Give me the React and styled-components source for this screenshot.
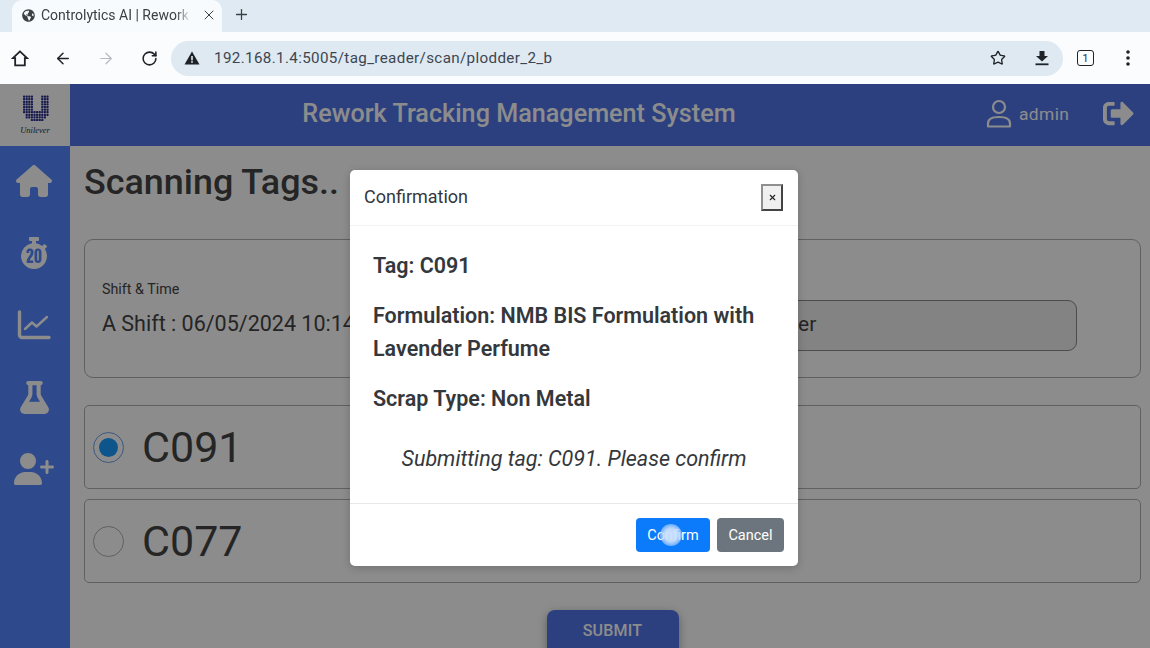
import styled, { createGlobalStyle } from 'styled-components';
import { ArrowLeft, ArrowRight, Plus, RotateCw, Star, X } from 'lucide-react';
import { FaGlobeAmericas, FaSignOutAlt, FaStopwatch20 } from 'react-icons/fa';
import { FaFlask, FaHouse, FaUserPlus } from 'react-icons/fa6';

const Global = createGlobalStyle`
    html, body { margin: 0; height: 100%; overflow: hidden; }
    body { font-family: Roboto, "Liberation Sans", sans-serif; color: #444; }
`;

const Shell = styled.div`
    width: 1150px;
    height: 648px;
    display: flex;
    flex-direction: column;
    overflow: hidden;
`;

const TabStrip = styled.div`
    height: 32px;
    background: #dfeaf3;
    display: flex;
    align-items: flex-end;
    padding-left: 12px;
`;

const Tab = styled.div`
    width: 210px;
    height: 32px;
    box-sizing: border-box;
    padding: 0 5px 2px 10px;
    background: #f8fbfd;
    border-radius: 10px 10px 0 0;
    display: flex;
    align-items: center;
    font-size: 14px;
    color: #3c4043;
    white-space: nowrap;
`;

const TabTitle = styled.span`
    width: 150px;
    margin-left: 6px;
    overflow: hidden;
    -webkit-mask-image: linear-gradient(90deg, #000 90%, transparent);
    mask-image: linear-gradient(90deg, #000 90%, transparent);
`;

const NewTab = styled.div`
    margin: 0 0 9px 11px;
    display: flex;
    color: #3c4043;
`;

const Toolbar = styled.div`
    height: 52px;
    background: #fafcfe;
    display: flex;
    align-items: center;
    padding-left: 11px;
`;

const NavButton = styled.div`
    width: 18px;
    display: flex;
    justify-content: center;
    margin-right: ${props => props.gap || 25}px;
    color: ${props => props.dim ? '#b5bbc0' : '#1f2327'};
`;

const Omnibox = styled.div`
    width: 892px;
    height: 35px;
    background: #dfe9f2;
    border-radius: 18px;
    display: flex;
    align-items: center;
    padding: 0 13px 0 13px;
    box-sizing: border-box;
    font-size: 15.2px;
    letter-spacing: .35px;
    color: #3d4650;
`;

const Url = styled.span`
    margin-left: 14px;
    flex: 1;
`;

const OmniIcon = styled.div`
    display: flex;
    margin-left: ${props => props.gap || 0}px;
    color: #1f2327;
`;

const TabCount = styled.div`
    width: 17px;
    height: 16px;
    box-sizing: border-box;
    margin: 0 32px 0 14px;
    border: 1.8px solid #1f2327;
    border-radius: 3px;
    font-size: 10.5px;
    display: flex;
    align-items: center;
    justify-content: center;
    color: #1f2327;
`;

const Page = styled.div`
    position: relative;
    flex: 1;
    min-height: 0;
    background: #fff;
    overflow: hidden;
`;

const Header = styled.header`
    height: 62px;
    display: flex;
    align-items: center;
    background: #5076e8;
`;

const LogoCell = styled.div`
    width: 70px;
    height: 62px;
    background: #fff;
    display: flex;
    flex-direction: column;
    align-items: center;
    padding-top: 11px;
    box-sizing: border-box;
    color: #2a2f8c;
`;

const LogoWord = styled.span`
    font-family: "Liberation Serif", serif;
    font-style: italic;
    font-size: 8.5px;
    line-height: 10px;
    margin-top: 3px;
    color: #333;
`;

const HeaderTitle = styled.h1`
    margin: 0;
    width: 898px;
    padding-bottom: 4px;
    text-align: center;
    font-size: 25.2px;
    font-weight: 500;
    color: #fff;
`;

const UserBox = styled.div`
    display: flex;
    align-items: center;
    gap: 7px;
    margin-left: 18px;
    padding-bottom: 3px;
    font-size: 17.4px;
    letter-spacing: .4px;
    color: #fff;
`;

const Logout = styled.div`
    display: flex;
    margin-left: 34px;
    padding-bottom: 3px;
    color: #fff;
`;

const Main = styled.div`
    display: flex;
    height: 502px;
`;

const Sidebar = styled.nav`
    width: 70px;
    flex: none;
    background: #5587ff;
    display: flex;
    flex-direction: column;
    align-items: center;
    padding: 16px 2px 0 0;
    box-sizing: border-box;
    gap: 34px;
    color: #fff;
`;

const SideIcon = styled.div`
    height: 38px;
    display: flex;
    align-items: center;
    justify-content: center;
`;

const Content = styled.main`
    flex: 1;
    padding: 14px 9px 0 14px;
`;

const Heading = styled.h2`
    margin: 0 0 35px;
    font-size: 35.9px;
    line-height: 44px;
    font-weight: 500;
`;

const ShiftCard = styled.section`
    height: 139px;
    box-sizing: border-box;
    border: 1px solid #b0b0b0;
    border-radius: 9px;
    padding: 0 63px 0 17px;
    display: flex;
    align-items: center;
    justify-content: space-between;
    margin-bottom: 27px;
`;

const Field = styled.div`
    display: flex;
    flex-direction: column;
    gap: 14px;
`;

const FieldLabel = styled.span`
    font-size: 14.3px;
`;

const FieldValue = styled.span`
    font-size: 21.5px;
    white-space: nowrap;
`;

const FakeInput = styled.div`
    width: 400px;
    height: 51px;
    box-sizing: border-box;
    align-self: flex-end;
    margin-bottom: 26px;
    padding: 0 0 3px 66px;
    border: 1px solid #8a8a8a;
    border-radius: 9px;
    background: #eee;
    display: flex;
    align-items: center;
    font-size: 21px;
`;

const TagRow = styled.label`
    height: 84px;
    box-sizing: border-box;
    border: 1px solid #b0b0b0;
    border-radius: 5px;
    display: flex;
    align-items: center;
    padding-left: 8px;
    gap: 18px;
    font-size: 43px;
    margin-bottom: 10px;
`;

const Radio = styled.span`
    width: 31px;
    height: 31px;
    box-sizing: border-box;
    border-radius: 50%;
    border: 1.5px solid ${props => props.on ? '#6f9fe8' : '#b0b0b0'};
    display: flex;
    align-items: center;
    justify-content: center;

    &::after {
        content: '';
        width: 19px;
        height: 19px;
        border-radius: 50%;
        background: ${props => props.on ? '#1a9cff' : 'transparent'};
    }
`;

const SubmitWrap = styled.div`
    display: flex;
    justify-content: center;
    padding-top: 17px;
`;

const Submit = styled.button`
    width: 132px;
    height: 48px;
    border: 0;
    border-radius: 8px;
    background: #5076e8;
    color: #fff;
    font: 500 16px Roboto, sans-serif;
    letter-spacing: .2px;
    padding-bottom: 8px;
    box-shadow: 0 3px 10px rgba(0, 0, 0, .35);
`;

const Backdrop = styled.div`
    position: absolute;
    inset: 0;
    background: rgba(0, 0, 0, .45);
    padding: 86px 0 0 350px;
`;

const Modal = styled.div`
    width: 448px;
    height: 396px;
    background: #fff;
    border-radius: 5px;
    display: flex;
    flex-direction: column;
    box-shadow: 0 2px 8px rgba(0, 0, 0, .2);
`;

const ModalHead = styled.div`
    height: 56px;
    flex: none;
    box-sizing: border-box;
    border-bottom: 1px solid #f0f2f3;
    padding: 0 15px 0 14px;
    display: flex;
    align-items: center;
    justify-content: space-between;
    font-size: 18px;
    color: #33373b;
`;

const HeadTitle = styled.span`
    margin-top: -2px;
`;

const CloseButton = styled.div`
    width: 22px;
    height: 27px;
    box-sizing: border-box;
    border: 2px solid;
    border-color: #8f8f8f #444 #444 #8f8f8f;
    background: #f0f0f0;
    display: flex;
    align-items: center;
    justify-content: center;
    color: #222;
`;

const ModalBody = styled.div`
    flex: 1;
    padding: 23px 23px 0;
    font-size: 21.5px;
    font-weight: 600;
    line-height: 33px;
    color: #34383c;
`;

const Info = styled.p`
    margin: 0 0 17px;
`;

const Note = styled.p`
    margin: 27px 0 0;
    text-align: center;
    font-size: 21.5px;
    font-weight: 400;
    font-style: italic;
`;

const ModalFoot = styled.div`
    height: 63px;
    flex: none;
    box-sizing: border-box;
    border-top: 1px solid #e6e8ea;
    padding: 14px 14px 0 0;
    display: flex;
    justify-content: flex-end;
    gap: 7px;
`;

const ModalButton = styled.button`
    position: relative;
    height: 34px;
    width: ${props => props.wide ? 74 : 67}px;
    border: 0;
    border-radius: 4px;
    background: ${props => props.primary ? '#0b7bfb' : '#6c757d'};
    color: #fff;
    font: 400 14.5px Roboto, sans-serif;
    padding: 0;
`;

const TouchDot = styled.span`
    position: absolute;
    left: 24px;
    top: 6px;
    width: 22px;
    height: 22px;
    border-radius: 50%;
    background: radial-gradient(circle, rgba(205, 225, 252, .95) 40%, rgba(150, 195, 250, .6) 75%, transparent);
`;

function UnileverMark() {
    const dots = [];
    for (let y = 0.5; y < 27; y += 2.6) {
        for (let x = 1; x < 27; x += 2.6) {
            const inGap = x > 9.5 && x < 17 && y < 15;
            const dx = x - 13.5, dy = y - 13;
            if (!inGap && (y < 14 || dx * dx + dy * dy < 170)) dots.push([x, y]);
        }
    }
    return (
        <svg width="27" height="27" viewBox="0 0 27 27" fill="currentColor">
            {dots.map(([x, y]) => <rect key={x + '-' + y} x={x} y={y} width="2.2" height="2.2" rx=".7" />)}
        </svg>
    );
}

function ChromeHome() {
    return (
        <svg width="19" height="19" viewBox="0 0 19 19" fill="none" stroke="currentColor" strokeWidth="1.9" strokeLinejoin="miter">
            <path d="M9.5 2 2 9.2h2.4v7.6h10.2V9.2H17z" />
        </svg>
    );
}

function DownloadIcon() {
    return (
        <svg width="16" height="16" viewBox="0 0 16 16" fill="currentColor">
            <path d="M5.5 1h5v5h3.5L8 11.6 2 6h3.5z" />
            <rect x="1.5" y="13.4" width="13" height="1.8" />
        </svg>
    );
}

function WarnIcon() {
    return (
        <svg width="16" height="14" viewBox="0 0 16 14">
            <path d="M8 .5 15.5 13.5H.5z" fill="#1f2327" />
            <rect x="7.2" y="5" width="1.6" height="4.4" fill="#dfe9f2" />
            <rect x="7.2" y="10.2" width="1.6" height="1.6" fill="#dfe9f2" />
        </svg>
    );
}

function KebabIcon() {
    return (
        <svg width="4" height="16" viewBox="0 0 4 16" fill="currentColor">
            <circle cx="2" cy="2" r="1.8" />
            <circle cx="2" cy="8" r="1.8" />
            <circle cx="2" cy="14" r="1.8" />
        </svg>
    );
}

function UserOutline() {
    return (
        <svg width="26" height="29" viewBox="0 0 26 29" fill="none" stroke="currentColor" strokeWidth="2.2">
            <circle cx="13" cy="8" r="6" />
            <path d="M2 27.5v-3c0-4 4-6.5 11-6.5s11 2.500 11 6.500v3z" strokeLinejoin="round" />
        </svg>
    );
}

function ChartIcon() {
    return (
        <svg width="34" height="30" viewBox="0 0 34 30" fill="none" stroke="currentColor">
            <path d="M2.500 2v23a2.500 2.500 0 0 0 2.500 2.500h27" strokeWidth="3.400" strokeLinecap="round" />
            <path d="M8 19l7-6.500 4.500 4L30 7" strokeWidth="2.400" strokeLinecap="round" strokeLinejoin="round" />
        </svg>
    );
}

export default function App() {
    return (
        <Shell>
            <Global />
            <TabStrip>
                <Tab>
                    <FaGlobeAmericas size={13} color="#3c4043" style={{ flex: 'none' }} />
                    <TabTitle>Controlytics AI | Rework Tracking</TabTitle>
                    <X size={16} strokeWidth={1.5} style={{ flex: 'none', marginLeft: 10 }} />
                </Tab>
                <NewTab><Plus size={17} strokeWidth={1.8} /></NewTab>
            </TabStrip>
            <Toolbar>
                <NavButton><ChromeHome /></NavButton>
                <NavButton><ArrowLeft size={19} strokeWidth={2} /></NavButton>
                <NavButton dim><ArrowRight size={19} strokeWidth={1.6} /></NavButton>
                <NavButton gap={13}><RotateCw size={17} strokeWidth={2.2} /></NavButton>
                <Omnibox>
                    <WarnIcon />
                    <Url>192.168.1.4:5005/tag_reader/scan/plodder_2_b</Url>
                    <OmniIcon><Star size={16} strokeWidth={2} /></OmniIcon>
                    <OmniIcon gap={28}><DownloadIcon /></OmniIcon>
                </Omnibox>
                <TabCount>1</TabCount>
                <OmniIcon><KebabIcon /></OmniIcon>
            </Toolbar>
            <Page>
                <Header>
                    <LogoCell>
                        <UnileverMark />
                        <LogoWord>Unilever</LogoWord>
                    </LogoCell>
                    <HeaderTitle>Rework Tracking Management System</HeaderTitle>
                    <UserBox><UserOutline />admin</UserBox>
                    <Logout><FaSignOutAlt size={31} /></Logout>
                </Header>
                <Main>
                    <Sidebar>
                        <SideIcon><FaHouse size={36} /></SideIcon>
                        <SideIcon><FaStopwatch20 size={32} /></SideIcon>
                        <SideIcon><ChartIcon /></SideIcon>
                        <SideIcon><FaFlask size={33} /></SideIcon>
                        <SideIcon><FaUserPlus size={40} /></SideIcon>
                    </Sidebar>
                    <Content>
                        <Heading>Scanning Tags..</Heading>
                        <ShiftCard>
                            <Field>
                                <FieldLabel>Shift &amp; Time</FieldLabel>
                                <FieldValue>A Shift : 06/05/2024 10:14</FieldValue>
                            </Field>
                            <FakeInput>Plodder</FakeInput>
                        </ShiftCard>
                        <TagRow><Radio on />C091</TagRow>
                        <TagRow><Radio />C077</TagRow>
                        <SubmitWrap><Submit>SUBMIT</Submit></SubmitWrap>
                    </Content>
                </Main>
                <Backdrop>
                    <Modal>
                        <ModalHead>
                            <HeadTitle>Confirmation</HeadTitle>
                            <CloseButton><X size={9} strokeWidth={3} /></CloseButton>
                        </ModalHead>
                        <ModalBody>
                            <Info>Tag: C091</Info>
                            <Info>Formulation: NMB BIS Formulation with Lavender Perfume</Info>
                            <Info>Scrap Type: Non Metal</Info>
                            <Note>Submitting tag: C091. Please confirm</Note>
                        </ModalBody>
                        <ModalFoot>
                            <ModalButton primary wide>Confirm<TouchDot /></ModalButton>
                            <ModalButton>Cancel</ModalButton>
                        </ModalFoot>
                    </Modal>
                </Backdrop>
            </Page>
        </Shell>
    );
}
